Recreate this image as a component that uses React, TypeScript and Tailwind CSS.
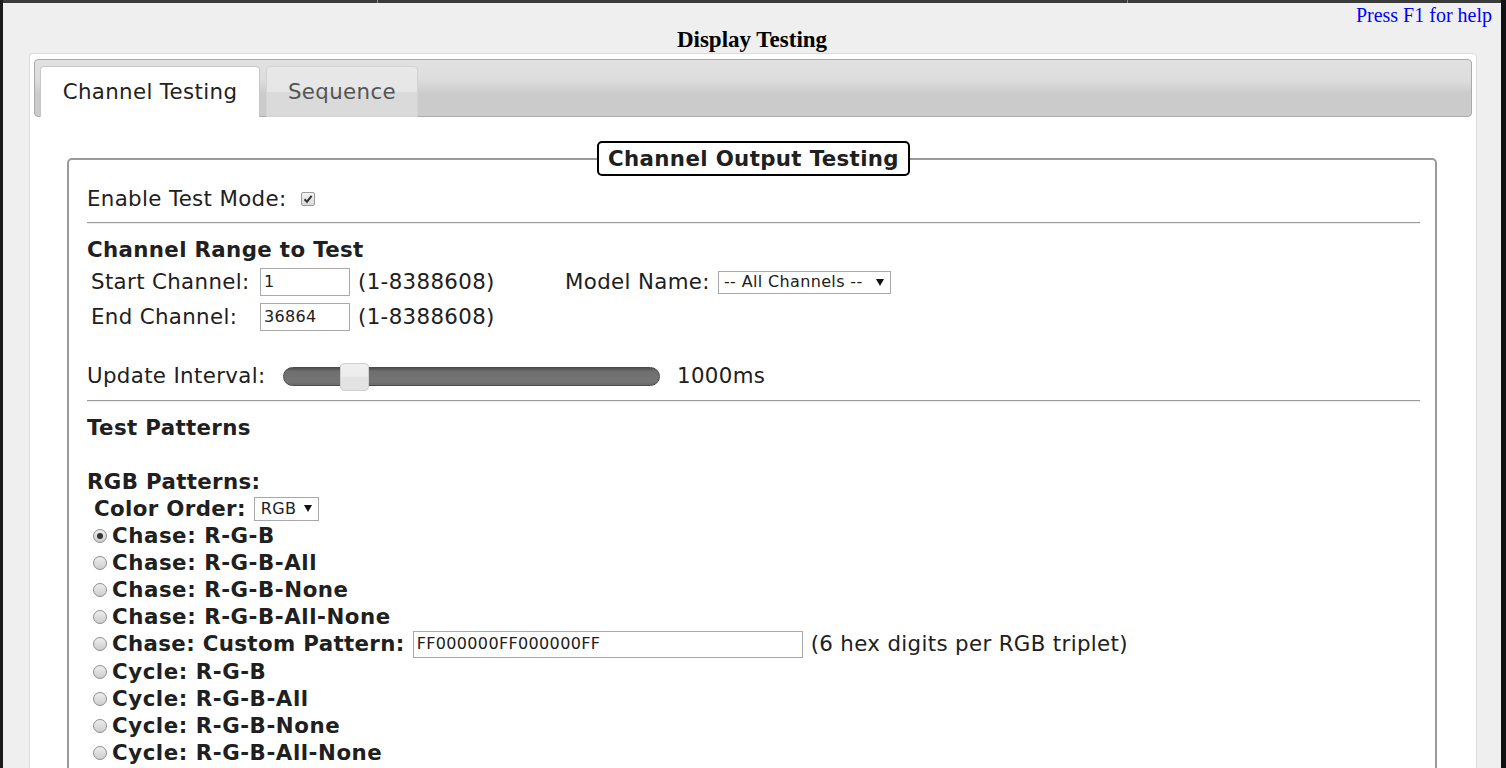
import React from "react";

function Radio({ checked = false }: { checked?: boolean }) {
  return (
    <div className="w-[14px] h-[14px] rounded-full border border-[#8e8e8e] bg-[linear-gradient(to_bottom,#eeeeee,#cdcdcd)] flex items-center justify-center shrink-0">
      {checked && <div className="w-[6px] h-[6px] rounded-full bg-[#333]" />}
    </div>
  );
}

function Checkbox() {
  return (
    <div className="w-[14px] h-[14px] rounded-[2px] border border-[#9a9a9a] bg-[linear-gradient(to_bottom,#f4f4f4,#d9d9d9)] flex items-center justify-center shrink-0">
      <svg width="10" height="10" viewBox="0 0 10 10">
        <path d="M1.5 5.2 L4 7.7 L8.6 1.8" stroke="#333" strokeWidth="2" fill="none" />
      </svg>
    </div>
  );
}

function Arrow() {
  return (
    <svg width="8" height="7" viewBox="0 0 8 7" className="shrink-0">
      <path d="M0 0 L8 0 L4 7 Z" fill="#111" />
    </svg>
  );
}

function Hr() {
  return <div className="h-0 border-t border-t-[#9c9c9c] border-b border-b-[#ececec]" />;
}

const radios = [
  "Chase: R-G-B",
  "Chase: R-G-B-All",
  "Chase: R-G-B-None",
  "Chase: R-G-B-All-None",
];
const cycles = ["Cycle: R-G-B", "Cycle: R-G-B-All", "Cycle: R-G-B-None", "Cycle: R-G-B-All-None"];

export default function App() {
  return (
    <div className="w-[1506px] h-[768px] overflow-hidden flex bg-[#efefef] text-[#202020] font-['DejaVu_Sans',sans-serif] text-[21.33px] tracking-[0.35px]">
      <div className="w-[3px] shrink-0 bg-[#1c1c1c]" />
      <div className="flex-1 flex flex-col min-w-0">
        <div className="h-[3px] flex shrink-0 bg-[#3b3b3b]">
          <div className="w-[374px]" />
          <div className="w-px bg-[#8a8a8a]" />
          <div className="w-[749px]" />
          <div className="w-px bg-[#8a8a8a]" />
          <div className="flex-1" />
        </div>
        <div className="h-[24px] shrink-0 flex justify-end items-center pr-[9px] font-['Liberation_Serif',serif] text-[20px] tracking-normal text-[#0000ff]">
          Press F1 for help
        </div>
        <div className="h-[26px] shrink-0 flex justify-center items-center font-['Liberation_Serif',serif] text-[23px] tracking-normal font-bold text-black">
          Display Testing
        </div>
        <div className="ml-[26px] mr-[24px] flex-1 border border-[#dcdcdc] rounded-[4px] bg-white pt-[5px] px-[4px]">
          <div className="border border-[#aaaaaa] rounded-[4px] bg-[linear-gradient(to_bottom,#e1e1e1_0%,#dddddd_35%,#cbcbcb_60%,#cbcbcb_100%)] pt-[6px] pl-[5px] flex items-end gap-[6px]">
            <div className="w-[220px] h-[51px] -mb-px border border-[#c8c8c8] border-b-0 rounded-t-[4px] bg-white flex items-center justify-center text-[#212121]">
              Channel Testing
            </div>
            <div className="w-[152px] h-[51px] -mb-px border border-[#d3d3d3] rounded-t-[4px] bg-[linear-gradient(to_bottom,#e8e8e8_0%,#e6e6e6_50%,#dadada_51%,#dadada_100%)] flex items-center justify-center text-[#555]">
              Sequence
            </div>
          </div>

          <fieldset className="ml-[33px] mr-[35px] mt-[24px] border-2 border-[#9a9a9a] rounded-[5px] pl-[18px] pr-[15px] pb-6 min-w-0">
            <legend className="mx-auto w-[313px] h-[35px] border-2 border-black rounded-[5px] bg-white text-center font-bold leading-[31px] px-0">
              Channel Output Testing
            </legend>

            <div className="mt-[9px] h-[28px] flex items-center">
              <span>Enable Test Mode:</span>
              <div className="ml-[15px]">
                <Checkbox />
              </div>
            </div>
            <div className="mt-[9px]">
              <Hr />
            </div>

            <div className="mt-[14px] h-[24px] leading-[24px] font-bold">Channel Range to Test</div>

            <div className="mt-[4px] h-[32px] flex items-center pl-[4px]">
              <div className="w-[169px] shrink-0">Start Channel:</div>
              <div className="w-[90px] h-[28px] border border-[#a9a9a9] px-[3px] flex items-center text-[16px] shrink-0">1</div>
              <div className="ml-[8px] w-[207px] shrink-0">(1-8388608)</div>
              <div className="w-[153px] shrink-0">Model Name:</div>
              <div className="w-[173px] h-[23px] border border-[#a9a9a9] flex items-center justify-between pl-[5px] pr-[6px] text-[16px] shrink-0">
                <span>-- All Channels --</span>
                <Arrow />
              </div>
            </div>
            <div className="mt-[3px] h-[32px] flex items-center pl-[4px]">
              <div className="w-[169px] shrink-0">End Channel:</div>
              <div className="w-[90px] h-[28px] border border-[#a9a9a9] px-[3px] flex items-center text-[16px] shrink-0">36864</div>
              <div className="ml-[8px] shrink-0">(1-8388608)</div>
            </div>

            <div className="mt-[27px] h-[32px] flex items-center">
              <div className="w-[196px] shrink-0">Update Interval:</div>
              <div className="relative w-[377px] h-[19px] rounded-full border border-[#4a4a4a] bg-[linear-gradient(to_bottom,#4e4e4e_0%,#6f6f6f_20%,#747474_80%,#6a6a6a_100%)] shrink-0">
                <div className="absolute left-[56px] top-[-5px] w-[29px] h-[28px] rounded-[4px] border border-[#cfcfcf] bg-[linear-gradient(to_bottom,#efefef_0%,#ececec_50%,#e3e3e3_51%,#e3e3e3_100%)]" />
              </div>
              <div className="ml-[17px]">1000ms</div>
            </div>
            <div className="mt-[8px]">
              <Hr />
            </div>

            <div className="mt-[12px] h-[27px] leading-[27px] font-bold">Test Patterns</div>
            <div className="h-[27px]" />
            <div className="h-[27px] leading-[27px] font-bold">RGB Patterns:</div>
            <div className="h-[27px] flex items-center pl-[7px] font-bold">
              <span>Color Order:</span>
              <div className="ml-[8px] w-[65px] h-[24px] border border-[#a9a9a9] flex items-center justify-between pl-[6px] pr-[6px] text-[16px] font-normal">
                <span>RGB</span>
                <Arrow />
              </div>
            </div>
            {radios.map((r, i) => (
              <div key={r} className="h-[27px] flex items-center pl-[6px] font-bold tracking-[0.55px]">
                <Radio checked={i === 0} />
                <span className="ml-[5px]">{r}</span>
              </div>
            ))}
            <div className="h-[28px] flex items-center pl-[6px]">
              <Radio />
              <span className="ml-[5px] font-bold">Chase: Custom Pattern:</span>
              <div className="ml-[8px] w-[390px] h-[27px] border border-[#a9a9a9] px-[3px] flex items-center text-[16px]">
                FF000000FF000000FF
              </div>
              <span className="ml-[8px]">(6 hex digits per RGB triplet)</span>
            </div>
            {cycles.map((r) => (
              <div key={r} className="h-[27px] flex items-center pl-[6px] font-bold tracking-[0.55px]">
                <Radio />
                <span className="ml-[5px]">{r}</span>
              </div>
            ))}
          </fieldset>
        </div>
      </div>
      <div className="w-[5px] shrink-0 bg-[#111]" />
    </div>
  );
}
